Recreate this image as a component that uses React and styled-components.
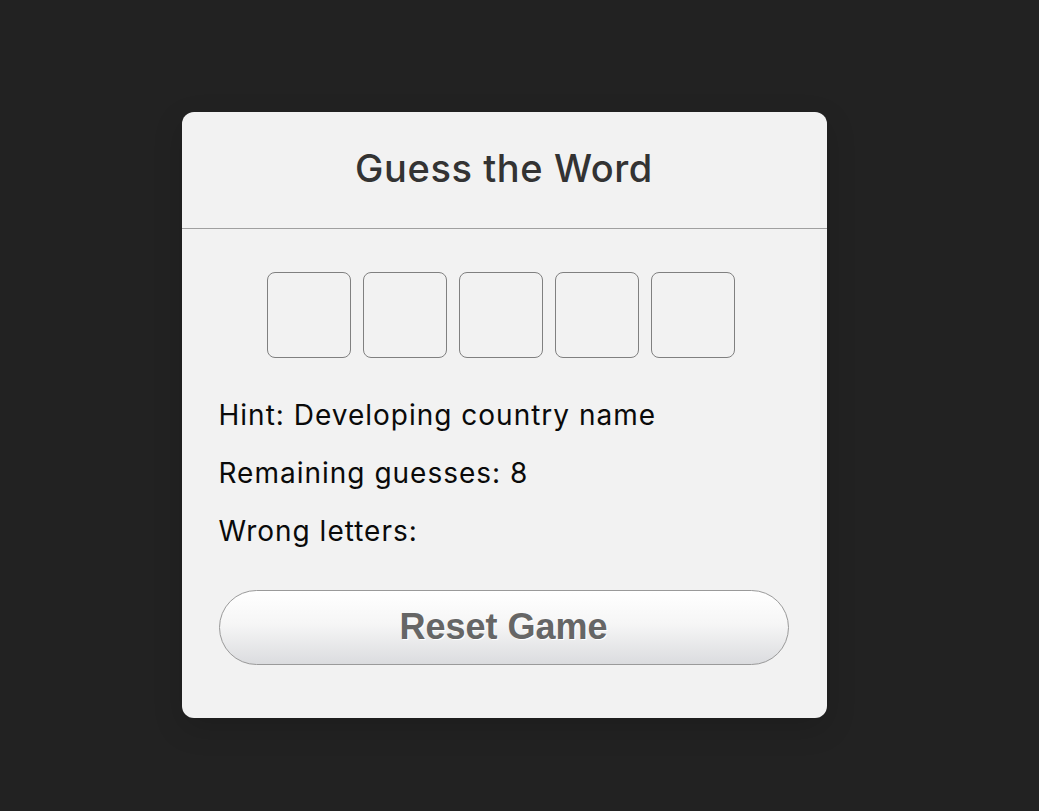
import styled, { createGlobalStyle } from 'styled-components';

const GlobalStyle = createGlobalStyle`
  html, body {
    margin: 0;
    padding: 0;
    background: #222222;
  }
  body {
    font-family: "Inter", "Noto Sans", sans-serif;
  }
`;

const Page = styled.div`
  min-height: 811px;
  display: flex;
  justify-content: center;
  padding-top: 112px;
  padding-right: 31px;
  box-sizing: border-box;
`;

const Card = styled.div`
  width: 645px;
  height: 606px;
  background: #f2f2f2;
  border-radius: 12px;
  box-shadow: 0 10px 30px rgba(0, 0, 0, 0.15);
  display: flex;
  flex-direction: column;
`;

const Header = styled.h1`
  margin: 0;
  height: 117px;
  display: flex;
  align-items: center;
  justify-content: center;
  font-size: 38px;
  font-weight: 500;
  letter-spacing: 0.6px;
  color: #333;
  border-bottom: 1px solid #a0a0a0;
  box-sizing: border-box;
  padding-bottom: 4px;
`;

const Content = styled.div`
  padding: 43px 38px 0 37px;
  display: flex;
  flex-direction: column;
`;

const Boxes = styled.div`
  display: flex;
  justify-content: center;
  gap: 12px;
  margin-right: 5px;
`;

const LetterBox = styled.input`
  width: 84px;
  height: 86px;
  margin: 0;
  box-sizing: border-box;
  border: 1px solid #808080;
  border-radius: 8px;
  background: transparent;
  font-size: 36px;
  text-align: center;
  outline: none;
`;

const Details = styled.div`
  margin-top: 40px;
  display: flex;
  flex-direction: column;
  gap: 23px;
`;

const Line = styled.p`
  margin: 0;
  font-size: 28px;
  line-height: 35px;
  letter-spacing: 1px;
  color: #0a0a0a;
`;

const ResetButton = styled.button`
  margin-top: 41px;
  width: 570px;
  height: 75px;
  border: 1px solid #9a9a9a;
  border-radius: 40px;
  background: linear-gradient(to bottom, #ffffff 0%, #f6f6f6 45%, #dbdcdf 100%);
  font-family: "Liberation Sans", Arial, sans-serif;
  font-weight: bold;
  font-size: 36px;
  color: #666;
  text-shadow: 1px 1px 0 #ffffff;
  cursor: pointer;
  padding: 0 0 2px;
`;

export default function App() {
  const letters = ['', '', '', '', ''];
  return (
    <>
      <GlobalStyle />
      <Page>
        <Card>
          <Header>Guess the Word</Header>
          <Content>
            <Boxes>
              {letters.map((l, i) => (
                <LetterBox key={i} value={l} readOnly />
              ))}
            </Boxes>
            <Details>
              <Line>Hint: Developing country name</Line>
              <Line>Remaining guesses: 8</Line>
              <Line>Wrong letters:</Line>
            </Details>
            <ResetButton>Reset Game</ResetButton>
          </Content>
        </Card>
      </Page>
    </>
  );
}
